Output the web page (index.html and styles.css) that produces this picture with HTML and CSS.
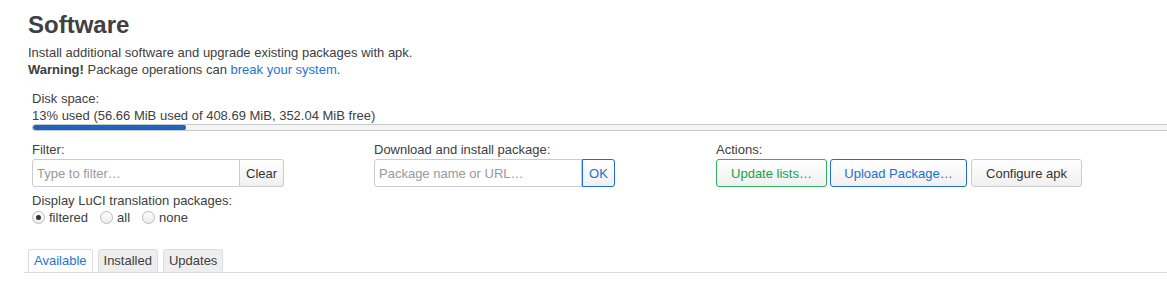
FILE: index.html
```html
<!DOCTYPE html>
<html lang="en">
<head>
  <meta charset="UTF-8">
  <title>Software - LuCI</title>
  <link rel="stylesheet" href="styles.css">
</head>
<body>
  <div class="main">
    <h2>Software</h2>
    <div class="desc">
      Install additional software and upgrade existing packages with apk.<br>
      <strong>Warning!</strong> Package operations can <a href="#">break your system</a>.
    </div>

    <div class="disk">
      <div>Disk space:</div>
      <div>13% used (56.66 MiB used of 408.69 MiB, 352.04 MiB free)</div>
      <div class="bar"><div class="fill" style="width:13%"></div></div>
    </div>

    <div class="controls">
      <div class="col">
        <label class="lbl">Filter:</label>
        <div class="group">
          <input type="text" placeholder="Type to filter…">
          <button class="btn">Clear</button>
        </div>
        <div class="lbl lang">Display LuCI translation packages:</div>
        <div class="radios">
          <label><input type="radio" name="lang" checked> filtered</label>
          <label><input type="radio" name="lang"> all</label>
          <label><input type="radio" name="lang"> none</label>
        </div>
      </div>
      <div class="col">
        <label class="lbl">Download and install package:</label>
        <div class="group">
          <input type="text" placeholder="Package name or URL…">
          <button class="btn btn-ok">OK</button>
        </div>
      </div>
      <div class="col">
        <label class="lbl">Actions:</label>
        <div class="actions">
          <button class="btn btn-green">Update lists…</button>
          <button class="btn btn-blue">Upload Package…</button>
          <button class="btn btn-conf">Configure apk</button>
        </div>
      </div>
    </div>

    <ul class="tabs">
      <li class="active"><a href="#">Available</a></li>
      <li><a href="#">Installed</a></li>
      <li><a href="#">Updates</a></li>
    </ul>
  </div>
</body>
</html>
```

FILE: styles.css
```css
:root {
  --fg: #404040;
  --link: #1f73d3;
  --border: #ccc;
  --green: #14a24f;
  --blue: #1e6fd0;
}
* { box-sizing: border-box; }
html, body { margin: 0; padding: 0; overflow: hidden; background: #fff; }
body {
  font-family: "Liberation Sans", Arial, sans-serif;
  font-size: 13px;
  line-height: 17px;
  color: var(--fg);
}
.main { padding: 10px 0 0 28px; overflow: hidden; }
h2 { margin: 0; font-size: 24px; line-height: 29px; font-weight: bold; color: var(--fg); }
.desc { margin-top: 5px; }
.desc a { color: var(--link); text-decoration: none; }

.disk { margin: 12px 0 0 4px; }
.bar {
  width: 1180px;
  height: 7px;
  border: 1px solid #c8c8c8;
  border-radius: 3px;
  background: #f5f5f5;
  overflow: hidden;
}
.fill { height: 100%; background: #1b64c2; border-radius: 2px; }

.controls {
  margin: 10px 0 0 4px;
  display: grid;
  grid-template-columns: 342px 342px auto;
}
.lbl { display: block; margin-bottom: 1px; }
.lang { margin: 5px 0 0; }

.group { display: flex; height: 28px; }
.group input {
  width: 208px;
  height: 28px;
  border: 1px solid var(--border);
  border-radius: 3px 0 0 3px;
  padding: 0 4px;
  font: inherit;
  color: var(--fg);
  outline: none;
}
.group input::placeholder { color: #999; }
.group .btn { border-radius: 0 3px 3px 0; border-left: none; padding: 0 6px; }

.btn {
  height: 28px;
  font: inherit;
  color: #333;
  background: linear-gradient(#fff, #f0f0f0);
  border: 1px solid var(--border);
  border-radius: 3px;
  padding: 0;
  white-space: nowrap;
  cursor: pointer;
}
.group .btn-ok { color: var(--blue); border: 1px solid var(--blue); width: 33px; padding: 0; }
.btn-green { color: var(--green); border-color: #2fb35e; width: 111px; }
.btn-blue { color: var(--blue); border-color: var(--blue); width: 137px; }
.btn-conf { width: 111px; margin-left: 1px; }
.actions { display: flex; gap: 3px; }

.radios { display: flex; gap: 12px; }
.radios label { display: flex; align-items: center; gap: 4px; }
.radios input {
  appearance: none;
  -webkit-appearance: none;
  margin: 0;
  width: 13px;
  height: 13px;
  border: 1px solid #bbb;
  border-radius: 50%;
  background: linear-gradient(#fff, #ececec);
  position: relative;
}
.radios input:checked::after {
  content: "";
  position: absolute;
  left: 3px; top: 3px;
  width: 5px; height: 5px;
  border-radius: 50%;
  background: #333;
}

.tabs {
  list-style: none;
  margin: 23px 0 0 -4px;
  padding: 0 0 0 4px;
  display: flex;
  gap: 5px;
  border-bottom: 1px solid #ddd;
}
.tabs li {
  border: 1px solid #ddd;
  border-bottom: none;
  border-radius: 3px 3px 0 0;
  background: #eee;
  padding: 2px 5px 3px;
}
.tabs a { color: var(--fg); text-decoration: none; }
.tabs li.active { background: #fff; }
.tabs li.active a { color: var(--link); }
```
